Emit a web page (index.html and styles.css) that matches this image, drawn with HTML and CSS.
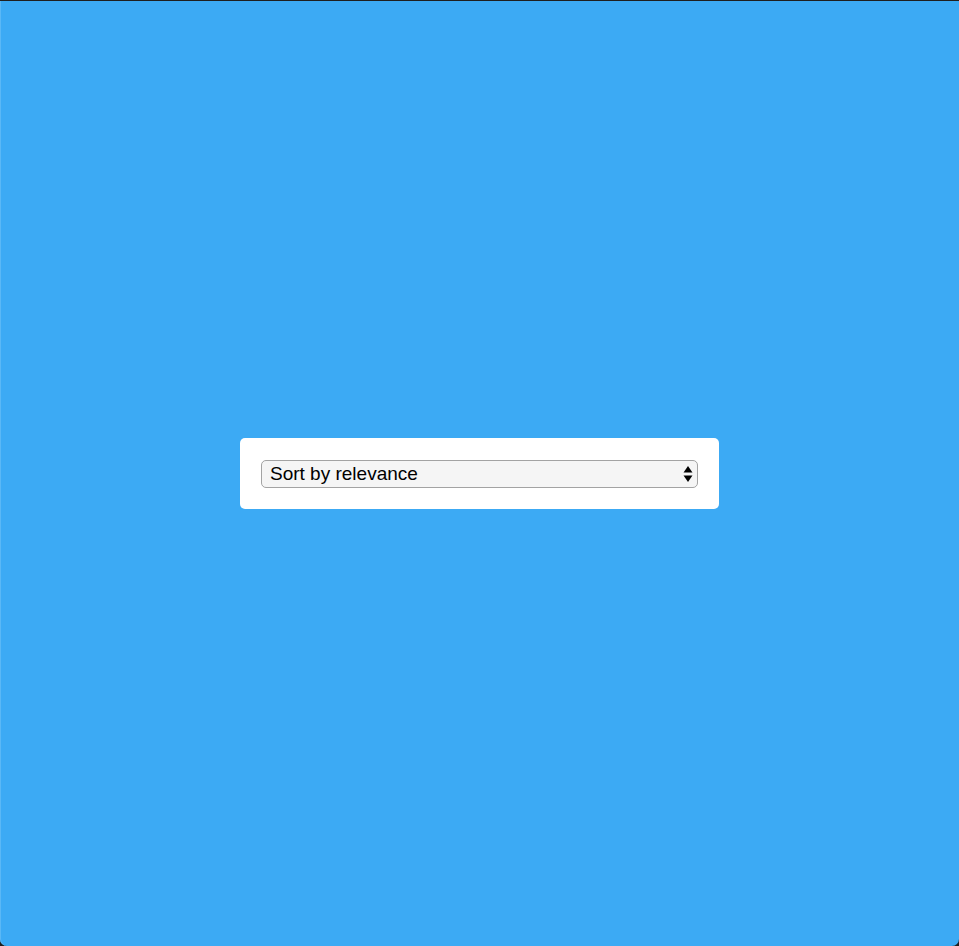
FILE: index.html
```html
<!DOCTYPE html>
<html lang="en">
<head>
<meta charset="utf-8">
<title>Sort</title>
<link rel="stylesheet" href="styles.css">
</head>
<body>
<div class="window">
  <div class="card">
    <div class="select-wrap">
      <select class="sort-select">
        <option>Sort by relevance</option>
        <option>Sort by date</option>
        <option>Sort by price</option>
      </select>
      <svg class="select-arrows" width="10" height="20" viewBox="0 0 10 20" aria-hidden="true">
        <path d="M5 2 L9.5 8.5 L0.5 8.5 Z" fill="#000"/>
        <path d="M5 18 L9.5 11.5 L0.5 11.5 Z" fill="#000"/>
      </svg>
    </div>
  </div>
</div>
</body>
</html>
```

FILE: styles.css
```css
html, body {
  margin: 0;
  padding: 0;
  height: 100%;
  background: #1f1f1f;
}

.window {
  box-sizing: border-box;
  height: 945px;
  margin-top: 1px;
  background: #3caaf4;
  box-shadow: inset 1px 0 0 #5ab8f6;
  border-radius: 0 0 7px 7px;
  display: flex;
  align-items: center;
  justify-content: center;
}

.card {
  background: #ffffff;
  border-radius: 5px;
  padding: 22px 21px 21px 21px;
  margin-bottom: 1px;
}

.select-wrap {
  position: relative;
  width: 437px;
  height: 28px;
}

.sort-select {
  appearance: none;
  -webkit-appearance: none;
  box-sizing: border-box;
  width: 100%;
  height: 100%;
  margin: 0;
  padding: 0 30px 0 8px;
  background: #f5f5f5;
  border: 1px solid #a3a3a3;
  border-radius: 5px;
  font-family: "Liberation Sans", Arial, Helvetica, sans-serif;
  font-size: 19px;
  color: #000;
  outline: none;
}

.select-arrows {
  position: absolute;
  right: 5px;
  top: 4px;
  pointer-events: none;
}
```
